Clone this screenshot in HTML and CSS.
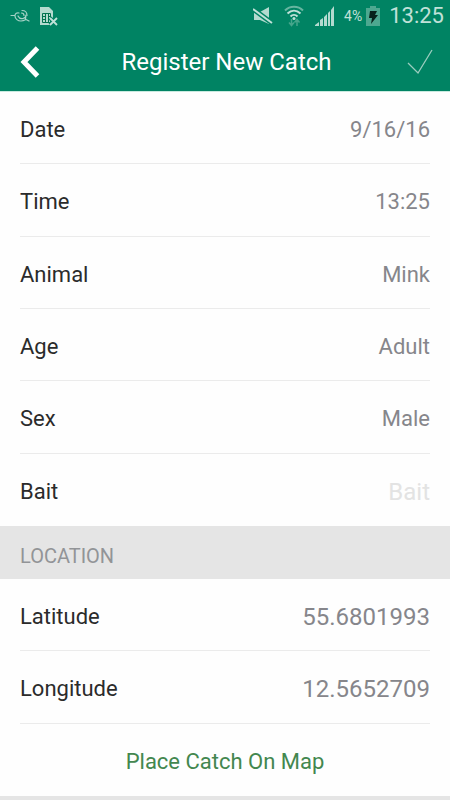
FILE: index.html
```html
<!DOCTYPE html>
<html lang="en">
<head>
<meta charset="utf-8">
<meta name="viewport" content="width=device-width, initial-scale=1">
<title>Register New Catch</title>
<link rel="stylesheet" href="styles.css">
</head>
<body>
<header class="header">
  <div class="status">
    <svg class="icon-bird" width="20" height="14" viewBox="0 0 20 14" fill="none" stroke="#a6d3c7" stroke-width="1.200" stroke-linecap="round" stroke-linejoin="round"><path d="M1 6.500h4c0-2 2-3 4-2.500M5 7c0 3 3 5 6 5 2 0 4-1 5-1.500l3 1.500M8 7c1 2 3 3 5 2.500 2-.5 3-2 3-3.500M16 6l-.5 4"/><path d="M11.500 4c1.500 0 2.500 1 2.500 2.500M12 1.500c3 0 5 2 5 5"/></svg>
    <svg class="icon-sim" width="20" height="20" viewBox="0 0 20 20"><path fill="#b3dacf" d="M1 1h9l4 4v14H1z"/><path fill="none" stroke="#00724f" stroke-width="1" d="M3.500 7.500h8v9h-8zM3.500 10.500h3M3.500 13.500h3M6.500 7.500v9M9.500 7.500v9M9.500 10.500h2"/><path d="m11 12 7 7m0-7-7 7" stroke="#008363" stroke-width="4"/><path d="m11 12 7 7m0-7-7 7" stroke="#c0e1d8" stroke-width="1.800"/></svg>
    <span class="spacer"></span>
    <svg class="icon-mute" width="20" height="20" viewBox="0 0 20 20"><path fill="#b3dacf" d="M1 6h6l9-5v17l-9-4H1z"/><path d="m0 3 19 14" stroke="#008363" stroke-width="5"/><path d="m0 3 19 14" stroke="#c0e1d8" stroke-width="2"/></svg>
    <svg class="icon-wifi" width="20" height="22" viewBox="0 0 20 22" fill="none"><path d="M1 5.500c5-5 13-5 18 0" stroke="#66b5a0" stroke-width="2"/><path d="M3.500 8.500c4-3.800 9-3.800 13 0M6.500 11.500c2-2 5-2 7 0" stroke="#c0e1d8" stroke-width="2"/><circle cx="10" cy="13.500" r="1.500" fill="#c0e1d8"/><path d="M7.500 14v6m-2.500-2.500 2.500 3 2.500-3M13 21v-6m-2.500 2.500 2.500-3 2.500 3" stroke="#45a58b" stroke-width="1.500"/></svg>
    <svg class="icon-signal" width="20" height="20" viewBox="0 0 20 20" fill="#b3dacf"><path d="M0 20v-1l4-3v4zM5 20v-6l3-2v8zM9 20v-9l3-3v12zM13 20V7l2-2v15zM16 20V4l3-4v20z"/></svg>
    <span class="battery-level">4%</span>
    <svg class="icon-battery" width="14" height="20" viewBox="0 0 14 20"><path fill="#4da890" d="M4 0h6v2h4v18H0V2h4z"/><path fill="#07241c" d="M4 5h7L9 9h3l-7 9 1-6H3z"/></svg>
    <time class="clock">13:25</time>
  </div>
  <nav class="toolbar">
    <button class="tool" type="button" aria-label="Back"><svg width="20" height="34" viewBox="0 0 20 34" fill="none"><path d="M17.500 3 4 17l13.500 14" stroke="#fff" stroke-width="5"/></svg></button>
    <h1 class="title">Register New Catch</h1>
    <button class="tool tool-save" type="submit" form="catch" aria-label="Save"><svg width="26" height="26" viewBox="0 0 26 26" fill="none"><path d="m1 14 10 10L25 1" stroke="#9bcdbf" stroke-width="1.300"/></svg></button>
  </nav>
</header>
<form class="form" id="catch">
  <div class="row"><label for="date">Date</label><input class="value" id="date" type="text" value="9/16/16"></div>
  <div class="row"><label for="time">Time</label><input class="value" id="time" type="text" value="13:25"></div>
  <div class="row"><label for="animal">Animal</label><select class="value" id="animal"><option>Mink</option></select></div>
  <div class="row"><label for="age">Age</label><select class="value" id="age"><option>Adult</option></select></div>
  <div class="row"><label for="sex">Sex</label><select class="value" id="sex"><option>Male</option></select></div>
  <div class="row row-last"><label for="bait">Bait</label><input class="value value-large" id="bait" type="text" placeholder="Bait"></div>
  <h2 class="section">LOCATION</h2>
  <div class="row"><label for="lat">Latitude</label><input class="value value-large" id="lat" type="text" value="55.6801993"></div>
  <div class="row"><label for="lng">Longitude</label><input class="value value-large" id="lng" type="text" value="12.5652709"></div>
  <button class="map-button" type="button">Place Catch On Map</button>
</form>
</body>
</html>
```
FILE: styles.css
```css
* {
  box-sizing: border-box;
}

body {
  margin: 0;
  min-height: 100vh;
  display: flex;
  flex-direction: column;
  background: #fefefe;
  color: #2b2b2b;
  font: 22px/32px Roboto, "Liberation Sans", sans-serif;
}

button,
input,
select {
  margin: 0;
  padding: 0;
  border: 0;
  border-radius: 0;
  background: none;
  font: inherit;
  appearance: none;
}

svg {
  display: block;
  flex: none;
}

.header {
  background: #008363;
  color: #fff;
  border-bottom: 1px solid #c8eadf;
}

.status {
  display: flex;
  align-items: center;
  height: 32px;
  padding: 0 6px 0 10px;
  color: #c0e1d8;
}

.spacer {
  flex: 1;
}

.icon-sim {
  margin-left: 9px;
}

.icon-wifi {
  margin-left: 11px;
}

.icon-signal {
  margin-left: 11px;
}

.battery-level {
  margin-left: 9px;
  font-size: 14px;
}

.icon-battery {
  margin-left: 4px;
}

.clock {
  margin-left: 9px;
}

.toolbar {
  display: flex;
  align-items: center;
  justify-content: space-between;
  height: 59px;
  padding: 0 17px 0 20px;
}

.tool {
  display: flex;
  width: 26px;
}

.tool-save {
  justify-content: flex-end;
}

.title {
  margin: 0;
  font-size: 24px;
  font-weight: 400;
}

.form {
  flex: 1;
  display: flex;
  flex-direction: column;
  border-bottom: 4px solid #e5e5e5;
}

.row {
  flex: 1 0 72px;
  display: flex;
  align-items: center;
  margin: 0 20px;
  padding-top: 5px;
  border-bottom: 1px solid #ebebeb;
}

.row-last {
  border-bottom-color: transparent;
}

.value {
  flex: 1;
  min-width: 0;
  height: 32px;
  color: #86868b;
  text-align: right;
  text-align-last: right;
}

.value-large {
  font-size: 24px;
}

.value::placeholder {
  color: #e3e3e3;
  opacity: 1;
}

.section {
  margin: 0;
  padding: 14px 20px 7px;
  background: #e5e5e5;
  color: #929497;
  font-size: 20px;
  font-weight: 400;
}

.map-button {
  flex: 1 0 72px;
  padding-top: 4px;
  color: #43874f;
}
```
